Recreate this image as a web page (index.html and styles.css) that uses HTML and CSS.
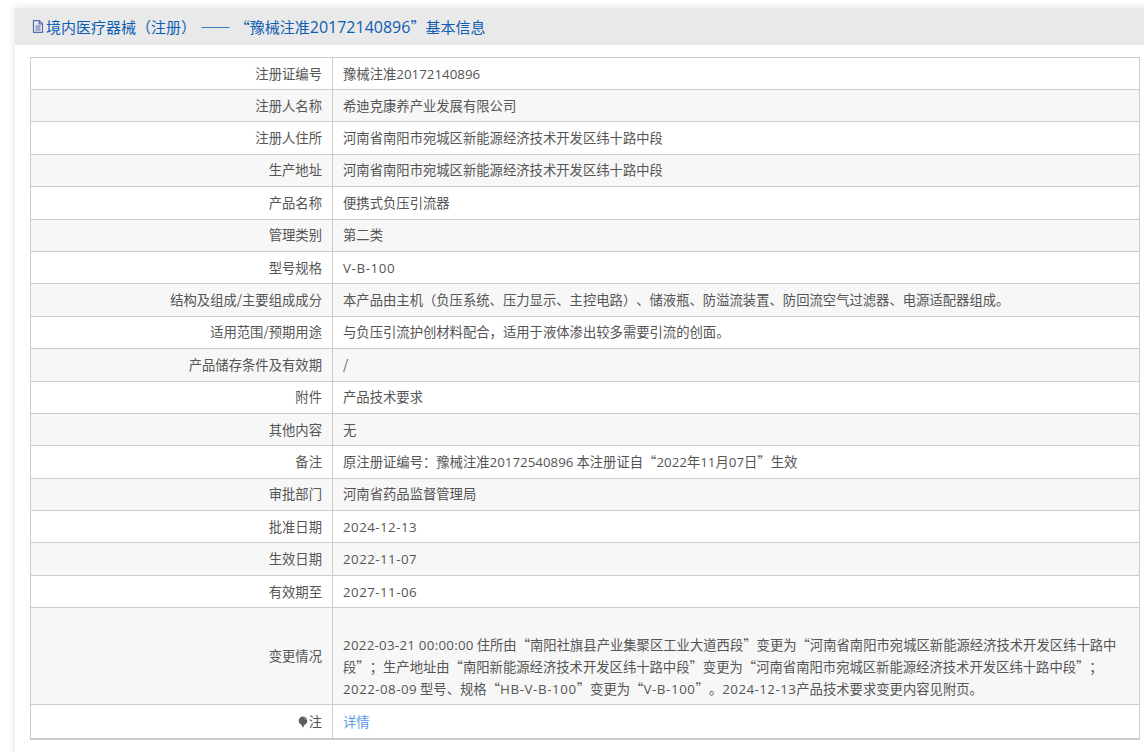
FILE: index.html
```html
<!DOCTYPE html>
<html lang="zh">
<head>
<meta charset="utf-8">
<title>境内医疗器械</title>
<link rel="stylesheet" href="styles.css">
</head>
<body>
<div class="panel">
  <h3 class="panel-head">
    <svg class="doc-icon" viewBox="0 0 12 13" width="12" height="13"><path d="M1.500.700h6l3 3v8.600h-9zM7.300.700v3.200h3.200M3.500 6h5M3.500 8h5M3.500 10h5" fill="none" stroke="#5a6bb8" stroke-width="1.200"/></svg><span>境内医疗器械&#xFF08;注册&#xFF09; —— “豫械注准<span class="num">20172140896</span>”基本信息</span>
  </h3>
  <div class="panel-body">
    <table class="info">
      <tr><th>注册证编号</th><td>豫械注准<span class="num">20172140896</span></td></tr>
      <tr><th>注册人名称</th><td>希迪克康养产业发展有限公司</td></tr>
      <tr><th>注册人住所</th><td>河南省南阳市宛城区新能源经济技术开发区纬十路中段</td></tr>
      <tr><th>生产地址</th><td>河南省南阳市宛城区新能源经济技术开发区纬十路中段</td></tr>
      <tr><th>产品名称</th><td>便携式负压引流器</td></tr>
      <tr><th>管理类别</th><td>第二类</td></tr>
      <tr><th>型号规格</th><td><span class="num code">V-B-100</span></td></tr>
      <tr><th>结构及组成/主要组成成分</th><td>本产品由主机&#xFF08;负压系统、压力显示、主控电路&#xFF09;、储液瓶、防溢流装置、防回流空气过滤器、电源适配器组成。</td></tr>
      <tr><th>适用范围/预期用途</th><td>与负压引流护创材料配合&#xFF0C;适用于液体渗出较多需要引流的创面。</td></tr>
      <tr><th>产品储存条件及有效期</th><td>/</td></tr>
      <tr><th>附件</th><td>产品技术要求</td></tr>
      <tr><th>其他内容</th><td>无</td></tr>
      <tr><th>备注</th><td>原注册证编号&#xFF1A;豫械注准<span class="num">20172540896</span> 本注册证自“<span class="num">2022</span>年<span class="num">11</span>月<span class="num">07</span>日”生效</td></tr>
      <tr><th>审批部门</th><td>河南省药品监督管理局</td></tr>
      <tr><th>批准日期</th><td><span class="num date">2024-12-13</span></td></tr>
      <tr><th>生效日期</th><td><span class="num date">2022-11-07</span></td></tr>
      <tr><th>有效期至</th><td><span class="num date">2027-11-06</span></td></tr>
      <tr class="tall"><th>变更情况</th><td><span class="num stamp">2022-03-21 00:00:00</span> 住所由“南阳社旗县产业集聚区工业大道西段”变更为“河南省南阳市宛城区新能源经济技术开发区纬十路中段”&#xFF1B;生产地址由“南阳新能源经济技术开发区纬十路中段”变更为“河南省南阳市宛城区新能源经济技术开发区纬十路中段”&#xFF1B;<br><span class="num date">2022-08-09</span> 型号、规格“<span class="num code">HB-V-B-100</span>”变更为“<span class="num code">V-B-100</span>”。<span class="num date">2024-12-13</span>产品技术要求变更内容见附页。</td></tr>
      <tr class="last"><th><svg class="bulb" viewBox="0 0 10 12" width="10" height="12"><circle cx="5" cy="4.800" r="4.300" fill="#5c5c5c"/><path d="M3.300 8.500h3.400L5 11.800z" fill="#5c5c5c"/><path d="M5.600 1.500a3 3 0 0 1 2.300 2.300" fill="none" stroke="#bbb" stroke-width=".8"/></svg>注</th><td><a href="#">详情</a></td></tr>
    </table>
  </div>
</div>
</body>
</html>
```

FILE: styles.css
```css
* { box-sizing: border-box; }
html, body { height: 100%; }
body {
  margin: 0;
  padding: 8px 0 0 15px;
  overflow: hidden;
  background: #fff;
  font-family: "Noto Sans CJK SC", "Liberation Sans", sans-serif;
  color: #555;
  text-spacing-trim: space-all;
}
.panel {
  width: 1140px;
  min-height: 760px;
  background: #fff;
  box-shadow: 0 0 8px rgba(0, 0, 0, 0.12);
}
.panel-head {
  display: flex;
  align-items: center;
  gap: 2px;
  height: 37px;
  margin: 0;
  padding-left: 17px;
  background: #e9e9e9;
  color: #0d5db3;
  font-size: 15px;
  font-weight: 400;
  word-spacing: 1px;
}
.panel-head .num { font-size: 16px; }
.doc-icon { flex: none; }
.num { font-family: "Open Sans", "Liberation Sans", sans-serif; }
.date { letter-spacing: 0.45px; }
.code { letter-spacing: 0.6px; }
.stamp { letter-spacing: 0.26px; }
.panel-body { padding: 12px 0 0 15px; }
.info {
  width: 1110px;
  table-layout: fixed;
  border-collapse: collapse;
  border: 1px solid #ccc;
  border-bottom-width: 2px;
  font-size: 13.33px;
  line-height: 22px;
}
.info th, .info td {
  height: 32.4px;
  padding: 0 10px;
  border: 1px solid #ccc;
  font-weight: 400;
  vertical-align: middle;
}
.info th { width: 302px; text-align: right; }
.info tr:first-child th, .info tr:first-child td { height: 32px; }
.info tr:nth-child(even) { background: #f7f7f7; }
.info .tall th, .info .tall td { height: 96.800px; }
.info .tall td { padding-top: 21px; }
.info .last th, .info .last td { height: 34.800px; padding-top: 1px; }
.info a { color: #5a9ae8; text-decoration: none; }
.bulb { vertical-align: -1px; margin-right: 1px; }
```
